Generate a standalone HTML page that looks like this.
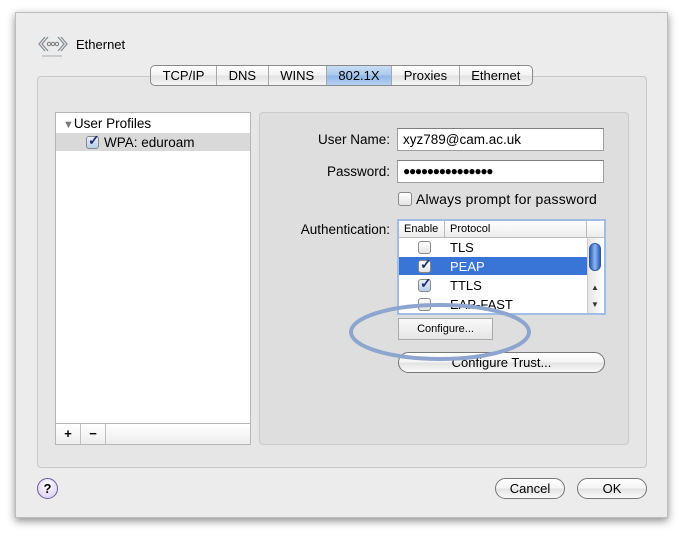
<!DOCTYPE html>
<html><head><style>
*{margin:0;padding:0;box-sizing:border-box}
body{width:683px;height:538px;background:#fff;position:relative;overflow:hidden;font-family:"Liberation Sans",sans-serif;font-size:13px;color:#000}
.a{position:absolute}
.win{left:15px;top:12px;width:653px;height:506px;background:#ececec;box-shadow:0 3px 8px rgba(0,0,0,.45);border:1px solid #bdbdbd}
.grp{left:37px;top:76px;width:610px;height:392px;background:#e6e6e6;border:1px solid #c8c8c8;border-radius:4px}
.tabs{left:150px;top:65px;height:21px;width:383px;display:flex;border:1px solid #8a8a8a;border-radius:5px;overflow:hidden;background:linear-gradient(#fff,#f2f2f2 50%,#e3e3e3 51%,#f5f5f5)}
.tabs div{flex:auto;text-align:center;line-height:19px;border-right:1px solid #a8a8a8;font-size:13px}
.tabs div:last-child{border-right:0}
.tabs .s{background:linear-gradient(#c9ddf4,#a9c8ec 50%,#8fb6e6 51%,#b5d2f3)}
.list{left:55px;top:112px;width:196px;height:333px;background:#fff;border:1px solid #b5b5b5}
.rp{left:259px;top:112px;width:370px;height:333px;background:#dedede;border:1px solid #cbcbcb;border-radius:4px}
.lbl{text-align:right;font-size:13px}
.fld{background:#fff;border:1px solid #9e9e9e;border-top-color:#7d7d7d;height:23px;line-height:21px;padding-left:5px;font-size:13.5px}
.cb{width:13px;height:13px;border:1px solid #888;border-radius:3px;background:linear-gradient(#fff,#e4e4e4)}
.chk::after{content:"✓";position:absolute;left:1px;top:-5px;font-size:14px;font-weight:bold;color:#1d2f6a}
.btn{border:1px solid #777;border-radius:11px;background:linear-gradient(#fff,#f4f4f4 50%,#e2e2e2 51%,#fafafa);text-align:center;font-size:13px}
</style></head><body>
<div class="a win"></div>
<svg class="a" style="left:36px;top:34px" width="34" height="24" viewBox="0 0 34 24"><path d="M9 3L3 10l6 7M12 3L6 10l6 7M22 3l6 7-6 7M25 3l6 7-6 7" fill="none" stroke="#8a8f9a" stroke-width="1.3"/><circle cx="13" cy="10" r="1.7" fill="none" stroke="#777"/><circle cx="17" cy="10" r="1.7" fill="none" stroke="#777"/><circle cx="21" cy="10" r="1.7" fill="none" stroke="#777"/><rect x="6" y="21" width="20" height="2" fill="#ccc"/></svg>
<div class="a" style="left:76px;top:37px;font-size:13px">Ethernet</div>
<div class="a grp"></div>
<div class="a tabs"><div>TCP/IP</div><div>DNS</div><div>WINS</div><div class="s">802.1X</div><div>Proxies</div><div>Ethernet</div></div>
<div class="a list">
 <div class="a" style="left:7px;top:3px;font-size:13.5px"><span style="color:#777;font-size:11px">▼</span>User Profiles</div>
 <div class="a" style="left:0;top:20px;width:194px;height:18px;background:#d9d9d9"></div>
 <div class="a cb chk" style="left:30px;top:23px;background:linear-gradient(#e8f0fb,#b8cdeb)"></div>
 <div class="a" style="left:48px;top:22px;font-size:13.5px">WPA: eduroam</div>
 <div class="a" style="left:0;top:310px;width:194px;height:21px;border-top:1px solid #b5b5b5;background:linear-gradient(#fff,#ededed)"></div>
 <div class="a" style="left:0;top:311px;width:25px;height:20px;border-right:1px solid #c0c0c0;text-align:center;line-height:20px;font-weight:bold">+</div>
 <div class="a" style="left:25px;top:311px;width:25px;height:20px;border-right:1px solid #c0c0c0;text-align:center;line-height:20px;font-weight:bold">−</div>
</div>
<div class="a rp"></div>
<div class="a lbl" style="left:280px;top:132px;width:110px;font-size:13.5px">User Name:</div>
<div class="a fld" style="left:397px;top:128px;width:207px">xyz789@cam.ac.uk</div>
<div class="a lbl" style="left:280px;top:164px;width:110px;font-size:13.5px">Password:</div>
<div class="a fld" style="left:397px;top:160px;width:207px;letter-spacing:-1.3px;font-size:12px">●●●●●●●●●●●●●●●</div>
<div class="a cb" style="left:398px;top:192px;width:14px;height:14px"></div>
<div class="a" style="left:416px;top:191px;font-size:14px;letter-spacing:.2px">Always prompt for password</div>
<div class="a lbl" style="left:280px;top:222px;width:110px;font-size:13.5px">Authentication:</div>
<div class="a" style="left:397px;top:219px;width:209px;height:96px;border:2px solid #9fbde6;background:#fff;overflow:hidden">
 <div class="a" style="left:0;top:0;width:205px;height:17px;border-bottom:1px solid #bbb;background:linear-gradient(#fff,#ececec);font-size:11px;line-height:16px">
  <span class="a" style="left:5px">Enable</span><span class="a" style="left:45px;top:0;height:16px;border-left:1px solid #bbb;padding-left:5px">Protocol</span><span class="a" style="left:187px;top:0;height:16px;border-left:1px solid #bbb"></span></div>
 <div class="a cb" style="left:19px;top:20px"></div><div class="a" style="left:51px;top:19px">TLS</div>
 <div class="a" style="left:0;top:36px;width:188px;height:18px;background:#3875d7"></div>
 <div class="a cb chk" style="left:19px;top:39px"></div><div class="a" style="left:51px;top:38px;color:#fff">PEAP</div>
 <div class="a cb chk" style="left:19px;top:58px;background:linear-gradient(#e8f0fb,#b8cdeb)"></div><div class="a" style="left:51px;top:57px">TTLS</div>
 <div class="a cb" style="left:19px;top:77px"></div><div class="a" style="left:51px;top:76px">EAP-FAST</div>
 <div class="a" style="left:188px;top:17px;width:17px;height:77px;background:linear-gradient(90deg,#e6e6e6,#fff);border-left:1px solid #ccc"></div>
 <div class="a" style="left:190px;top:22px;width:12px;height:28px;border-radius:6px;background:linear-gradient(90deg,#2a5fb8,#8fb6f0,#2a5fb8);border:1px solid #2f56a0"></div>
 <div class="a" style="left:192px;top:62px;font-size:8px;color:#333">▲</div>
 <div class="a" style="left:192px;top:79px;font-size:8px;color:#333">▼</div>
</div>
<div class="a" style="left:398px;top:318px;width:95px;height:22px;border:1px solid #aaa;background:linear-gradient(#fafafa,#e5e5e5);font-size:11px;text-align:center;line-height:20px">Configure...</div>
<div class="a btn" style="left:398px;top:352px;width:207px;height:21px;line-height:19px">Configure Trust...</div>
<svg class="a" style="left:348px;top:302px" width="185" height="62"><ellipse cx="92" cy="30" rx="89" ry="27" fill="none" stroke="#8ea5cf" stroke-width="4"/></svg>
<div class="a" style="left:37px;top:478px;width:21px;height:21px;border-radius:50%;border:1px solid #6a5a9a;background:radial-gradient(circle at 50% 35%,#fff,#d6c8f0);text-align:center;font-weight:bold;line-height:19px;font-size:13px">?</div>
<div class="a btn" style="left:495px;top:478px;width:70px;height:21px;line-height:19px">Cancel</div>
<div class="a btn" style="left:577px;top:478px;width:70px;height:21px;line-height:19px">OK</div>
</body></html>
